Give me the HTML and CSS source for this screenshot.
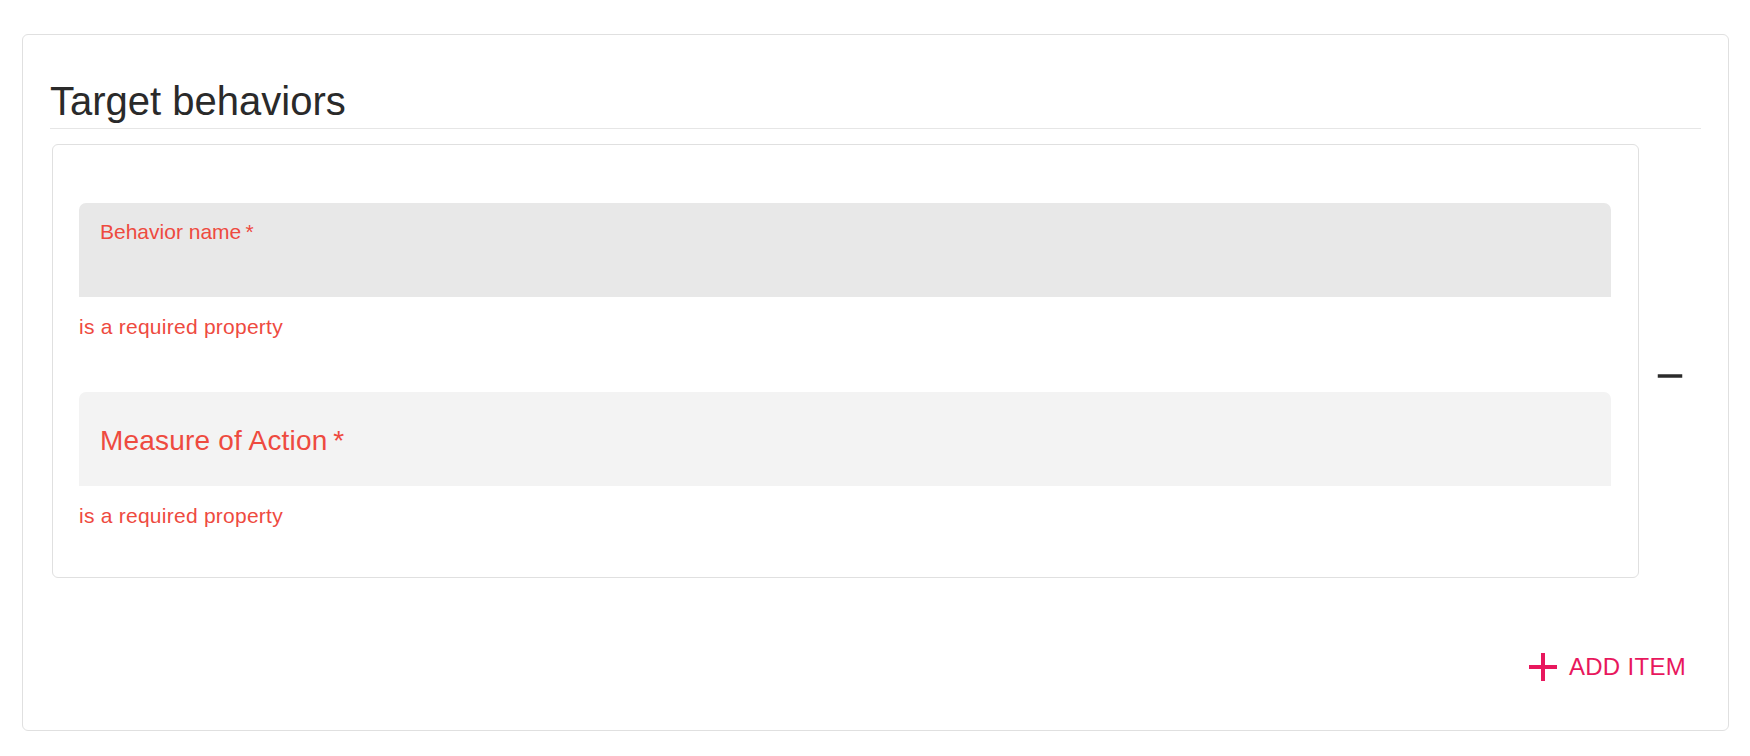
FILE: index.html
```html
<!DOCTYPE html>
<html lang="en">
<head>
    <meta charset="UTF-8">
    <meta name="viewport" content="width=device-width, initial-scale=1.0">
    <title>Target behaviors</title>
    <link rel="stylesheet" href="styles.css">
</head>
<body>
    <div class="card">
        <h2 class="section-title">Target behaviors</h2>

        <div class="array-row">
            <div class="item-card">
                <div class="field field-active">
                    <label class="field-label small">Behavior name&thinsp;*</label>
                </div>
                <div class="helper">is a required property</div>

                <div class="field field-idle">
                    <label class="field-label large">Measure of Action&thinsp;*</label>
                </div>
                <div class="helper">is a required property</div>
            </div>

            <div class="remove-col">
                <button class="icon-btn" title="Remove">
                    <svg width="42" height="42" viewBox="0 0 24 24"><path d="M19 13H5v-2h14v2z" fill="#2b2b2b"/></svg>
                </button>
            </div>
        </div>

        <div class="actions">
            <button class="add-btn">
                <svg width="48" height="48" viewBox="0 0 24 24"><path d="M19 13h-6v6h-2v-6H5v-2h6V5h2v6h6v2z" fill="currentColor"/></svg>
                <span>Add Item</span>
            </button>
        </div>
    </div>
</body>
</html>
```

FILE: styles.css
```css
body {
    margin: 0;
    font-family: "Liberation Sans", Arial, sans-serif;
    background: #fff;
}
.card {
    margin: 34px 21px 0 22px;
    border: 1px solid #e0e0e0;
    border-radius: 6px;
    padding: 0 27px 32px 27px;
}
.section-title {
    margin: 42px 0 0 0;
    font-size: 40px;
    line-height: 48px;
    font-weight: normal;
    color: #2a2a2a;
    padding-bottom: 3px;
    border-bottom: 1px solid #e6e6e6;
}
.array-row {
    display: flex;
    margin-top: 15px;
}
.item-card {
    flex: 1;
    margin-left: 2px;
    border: 1px solid #e0e0e0;
    border-radius: 6px;
    padding: 58px 27px 44px 26px;
}
.field {
    height: 94px;
    border-radius: 7px 7px 0 0;
    padding-left: 21px;
    box-sizing: border-box;
}
.field-active {
    background-color: #e8e8e8;
}
.field-idle {
    background-color: #f3f3f3;
    margin-top: 48px;
    display: flex;
    align-items: center;
    padding-top: 3px;
}
.field-label {
    color: #ee4a3f;
    display: block;
}
.small {
    font-size: 21px;
    line-height: 21px;
    padding-top: 18px;
}
.large {
    font-size: 28px;
    line-height: 28px;
    letter-spacing: 0.2px;
}
.helper {
    margin-top: 12px;
    font-size: 21px;
    line-height: 35px;
    letter-spacing: 0.25px;
    color: #ee4a3f;
}
.remove-col {
    width: 62px;
    display: flex;
    align-items: center;
    justify-content: center;
    padding-top: 30px;
}
.icon-btn {
    background: none;
    border: none;
    padding: 0;
    cursor: pointer;
    display: flex;
}
.actions {
    display: flex;
    justify-content: flex-end;
    margin-top: 57px;
}
.add-btn {
    display: flex;
    align-items: center;
    height: 63px;
    padding: 0 15px 0 4px;
    background: none;
    border: none;
    color: #e8175d;
    font-family: inherit;
    font-size: 24px;
    letter-spacing: 0.3px;
    text-transform: uppercase;
    cursor: pointer;
}
.add-btn svg {
    margin-right: 2px;
}
```
